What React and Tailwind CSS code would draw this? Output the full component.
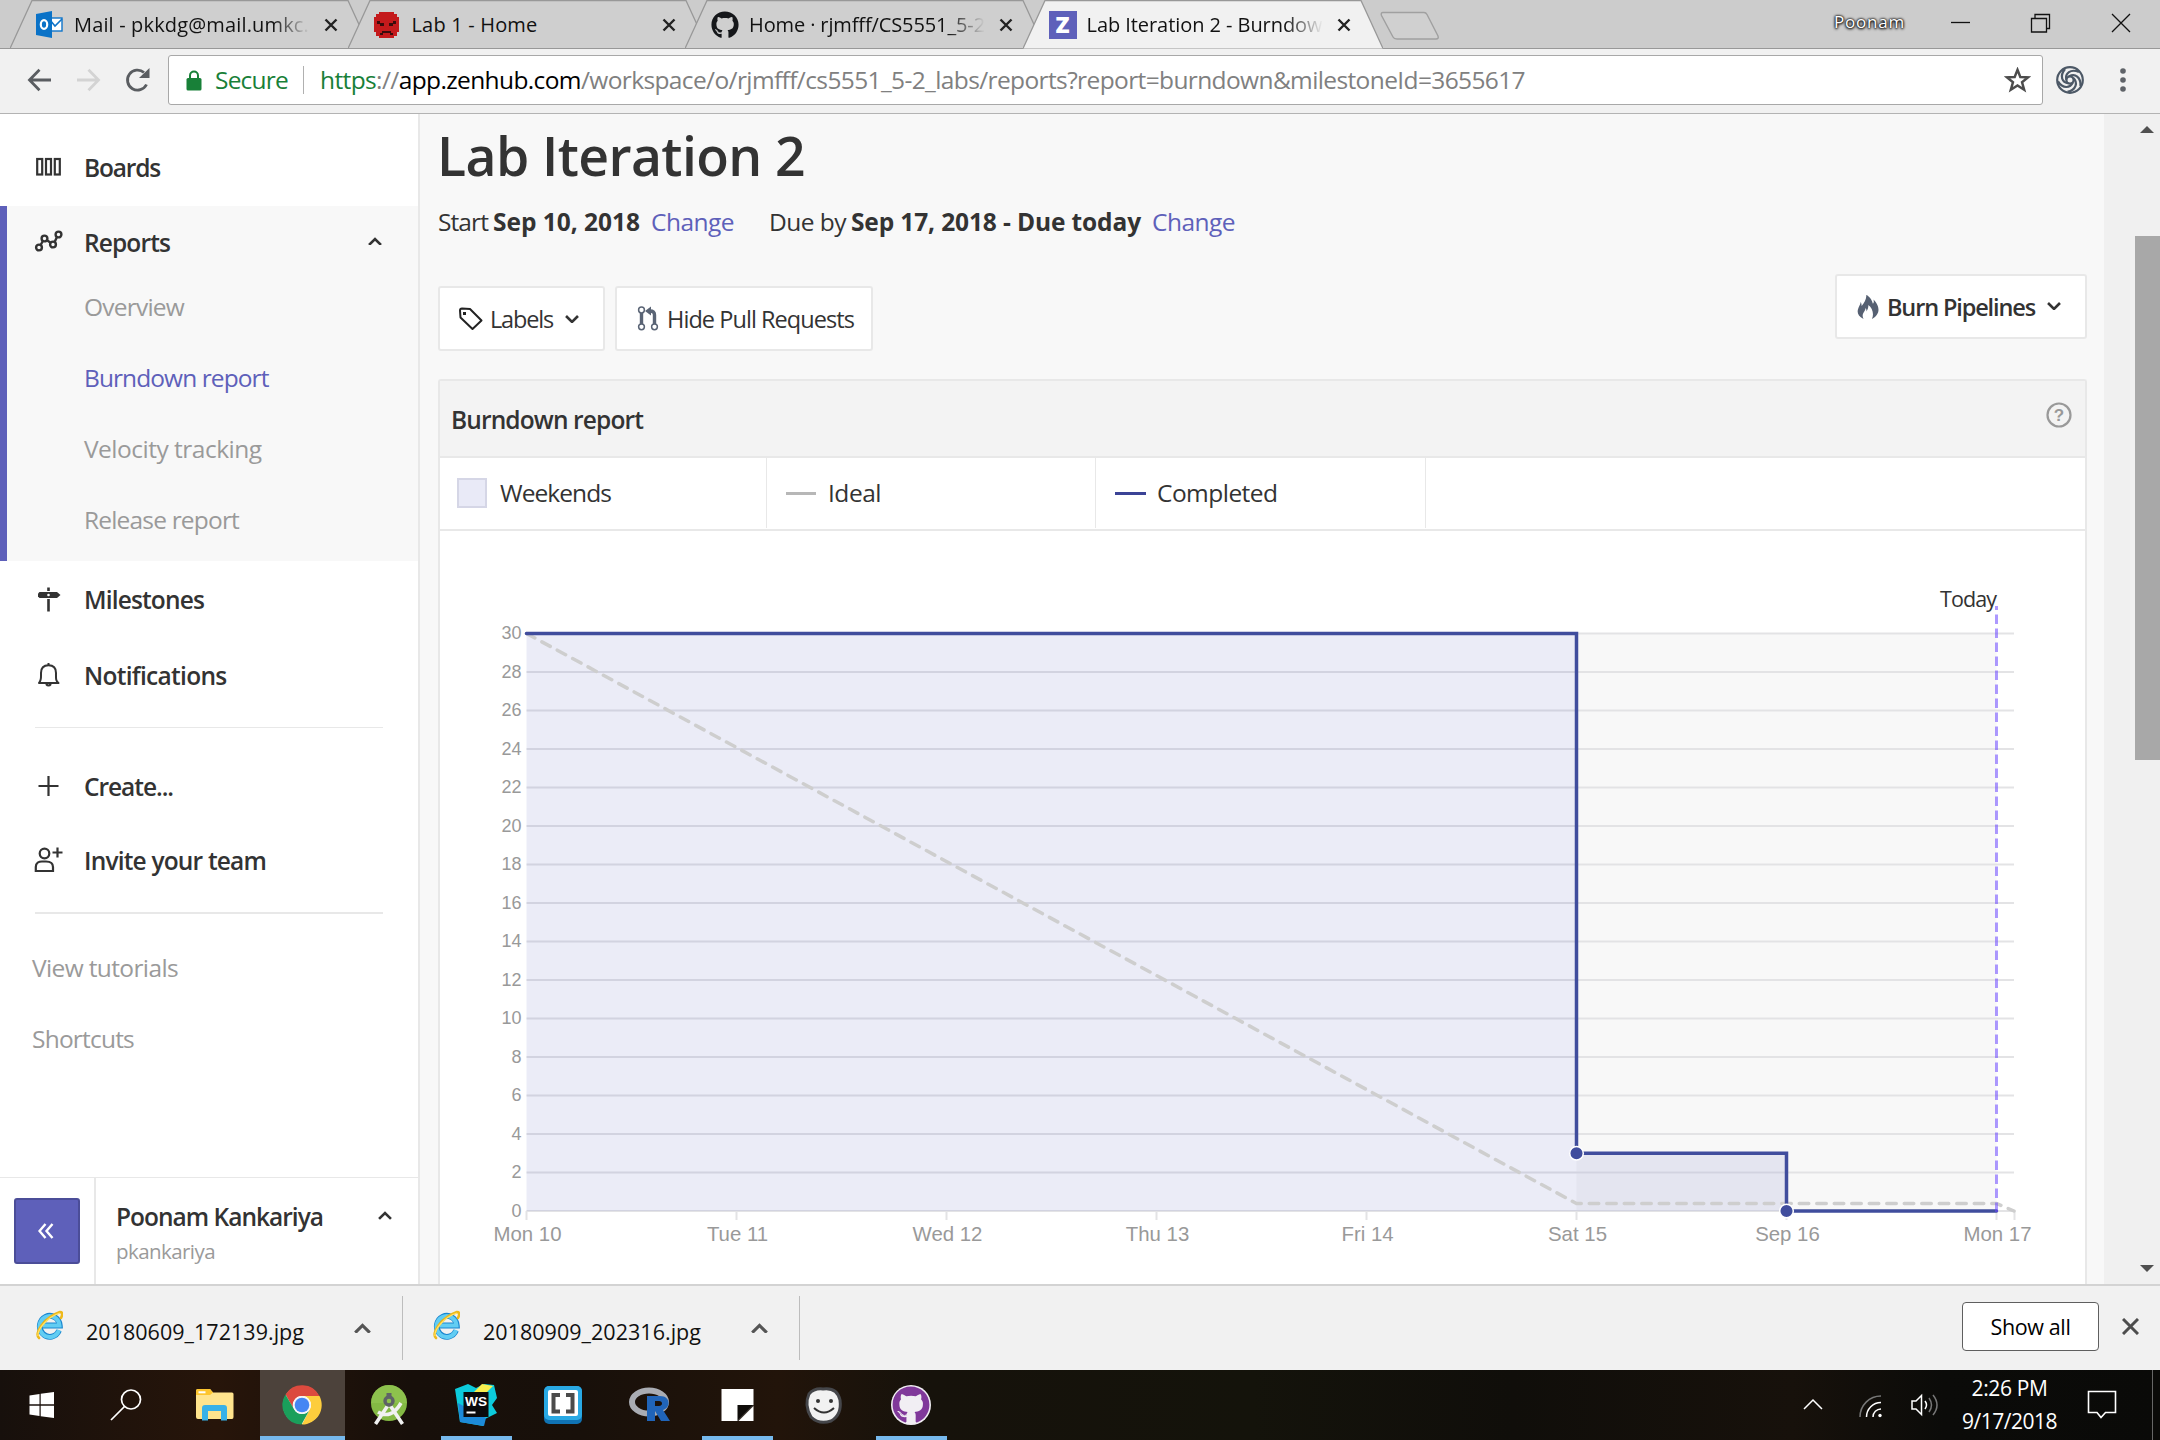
import { useLayoutEffect, useRef } from "react";
import { FaGithub } from "react-icons/fa";
import { ImFire } from "react-icons/im";

/* Single line of text whose tracking is adjusted so that it spans w pixels. */
function Fit({ w, className = "", children }) {
  const ref = useRef(null);
  useLayoutEffect(() => {
    const el = ref.current;
    el.style.letterSpacing = "0px";
    const natural = el.getBoundingClientRect().width;
    el.style.letterSpacing = `${(w - natural) / el.textContent.length}px`;
  }, [w, children]);
  return (
    <span ref={ref} className={`inline-block shrink-0 whitespace-pre ${className}`}>
      {children}
    </span>
  );
}

function Chevron({ up, className = "", size = 14, stroke = "#333", sw = 2.6 }) {
  return (
    <svg width={size} height={size * 0.64} viewBox="0 0 14 9" className={`shrink-0 ${className}`} fill="none" stroke={stroke} strokeWidth={sw}>
      <path d={up ? "M1 8 L7 2 L13 8" : "M1 1 L7 7 L13 1"} />
    </svg>
  );
}

/* ---------- Browser tabs ---------- */

function OutlookIcon() {
  return (
    <svg width="27" height="27" viewBox="0 0 27 27">
      <rect x="13" y="7" width="13" height="13" fill="#fff" stroke="#0f74c9" strokeWidth="1.4" />
      <path d="M14 9 L19 15 L26 8" fill="none" stroke="#0f74c9" strokeWidth="1.6" />
      <path d="M0 3 L16 0 V27 L0 24 Z" fill="#0a72c7" />
      <ellipse cx="8" cy="13.5" rx="3.2" ry="4.3" fill="none" stroke="#fff" strokeWidth="2.2" />
    </svg>
  );
}

function AngryIcon() {
  return (
    <svg width="25" height="26" viewBox="0 0 25 26">
      <path d="M5 0 H20 V2 H23 V5 H25 V20 H23 V24 H20 V26 H5 V24 H2 V20 H0 V5 H2 V2 H5 Z" fill="#c41a1c" />
      <path d="M3 9 H6 V11 H10 V14 H6 V12 H3 Z M22 9 H19 V11 H15 V14 H19 V12 H22 Z M8 19 H17 V21 H19 V23 H16 V21 H9 V23 H6 V21 H8 Z" fill="#3a0c0c" />
    </svg>
  );
}

function ZenIcon() {
  return (
    <span className="flex h-7 w-7 items-center justify-center bg-[#5e60ba] font-['Open_Sans',sans-serif] text-[23px] leading-none font-extrabold text-white">Z</span>
  );
}

function Tab({ icon, label, w, active, fade }) {
  return (
    <div className={`relative -mr-[22.5px] h-[49px] w-[360px] shrink-0 ${active ? "z-10" : ""}`}>
      <svg className="absolute inset-0" width="360" height="49" viewBox="0 0 360 49">
        <path d="M0 48.5 L22 0.5 H338 L360 48.5" fill={active ? "#f1f1f1" : "#cfcfcf"} stroke="#989898" strokeWidth="1.3" />
        {!active && <path d="M0 48.5 H360" stroke="#989898" />}
      </svg>
      <div className="relative flex h-[49px] items-center pl-[26px]">
        <span className="flex w-7 shrink-0 items-center">{icon}</span>
        <span className={`ml-[10px] w-[236px] overflow-hidden text-[20px] leading-[30px] text-[#111] ${fade ? "[mask-image:linear-gradient(to_right,black_84%,transparent_100%)]" : ""}`}>
          <Fit w={w}>{label}</Fit>
        </span>
        <svg width="14" height="14" viewBox="0 0 14 14" className="ml-[14px]" stroke="#222" strokeWidth="2.4">
          <path d="M1.5 1.5 L12.5 12.5 M12.5 1.5 L1.5 12.5" />
        </svg>
      </div>
    </div>
  );
}

function TabStrip() {
  return (
    <div className="flex h-[49px] shrink-0 border-b border-[#989898] bg-[#cccccc] pl-[10px]">
      <Tab icon={<OutlookIcon />} label="Mail - pkkdg@mail.umkc." w={235} fade />
      <Tab icon={<AngryIcon />} label="Lab 1 - Home" w={126} />
      <Tab icon={<FaGithub size={28} color="#15171a" />} label="Home · rjmfff/CS5551_5-2" w={236} fade />
      <Tab icon={<ZenIcon />} label="Lab Iteration 2 - Burndow" w={236} active fade />
      <svg width="62" height="30" viewBox="0 0 62 30" className="mt-[11px] ml-[19px]">
        <path d="M4 1.5 H45 Q47 1.5 48 3.5 L59 25 Q60 28 57 28 H18 Q15 28 14 26 L2.5 4.5 Q1.5 1.5 4 1.5 Z" fill="#d0d0d0" stroke="#a0a0a0" strokeWidth="1.4" />
      </svg>
      <div className="ml-auto flex h-[46px] items-center">
        <Fit w={71} className="mb-[2px] text-[17px] text-white [text-shadow:0_0_2px_#000,0_0_3px_#000,0_1px_3px_#000]">Poonam</Fit>
        <svg width="180" height="20" viewBox="0 0 180 20" className="mr-[29px] ml-[46px]" fill="none" stroke="#111" strokeWidth="1.3">
          <path d="M0 9.5 H19" />
          <path d="M80.5 5.5 H95.5 V19 H80.5 Z M84 5.5 V1.5 H98.5 V15.5 H95.5" />
          <path d="M161 1 L179 19 M179 1 L161 19" />
        </svg>
      </div>
    </div>
  );
}

/* ---------- Address bar ---------- */

function Toolbar() {
  return (
    <div className="flex h-[65px] shrink-0 items-center border-b border-[#b3b3b3] bg-[#f1f1f1] pb-[2px]">
      <svg width="124" height="26" viewBox="0 0 124 26" className="ml-[27px]" fill="none" strokeWidth="2.8">
        <path d="M24 13 H3 M12.5 2.8 L2.5 13 L12.5 23.2" stroke="#5a5d61" />
        <path d="M50 13 H71 M61.5 2.8 L71.5 13 L61.5 23.2" stroke="#d3d3d3" />
        <path d="M119.5 17.5 A10 10 0 1 1 117 5.5" stroke="#5a5d61" />
        <path d="M122.500 1 V11 H112 Z" fill="#5a5d61" />
      </svg>
      <div className="ml-[17px] flex h-[50px] w-[1875px] items-center rounded-[3px] border border-[#a8a8a8] bg-white">
        <svg width="16" height="21" viewBox="0 0 16 21" className="ml-[17px]">
          <rect x="0.5" y="8" width="15" height="12.5" rx="1.5" fill="#188038" />
          <path d="M4 9 V5.5 A4 4 0 0 1 12 5.5 V9" fill="none" stroke="#188038" strokeWidth="2" />
        </svg>
        <Fit w={73} className="ml-[13px] text-[24.5px] text-[#188038]">Secure</Fit>
        <span className="ml-[15px] h-[28px] w-px bg-[#b0b0b0]" />
        <Fit w={1205} className="ml-[16px] text-[24.5px] text-[#808080]">
          <span className="text-[#188038]">https</span>://<span className="text-black">app.zenhub.com</span>/workspace/o/rjmfff/cs5551_5-2_labs/reports?report=burndown&amp;milestoneId=3655617
        </Fit>
        <svg width="27" height="26" viewBox="0 0 27 26" className="mr-[11px] ml-auto" fill="none" stroke="#4c4c4c" strokeWidth="2.4">
          <path d="M13.5 2.8 L16.3 10 L24.2 10.3 L18 15.2 L20.2 22.8 L13.5 18.4 L6.8 22.8 L9 15.2 L2.8 10.3 L10.7 10 Z" />
        </svg>
      </div>
      <svg width="30" height="30" viewBox="-15 -15 30 30" className="ml-[12px]" fill="none" stroke="#4c5866" strokeWidth="2.2">
        <circle r="12.8" />
        <circle r="3.6" />
        {[0, 72, 144, 216, 288].map((a) => (
          <path key={a} transform={`rotate(${a})`} d="M-1 -3.6 C5 -7 11 -3 10.5 6" />
        ))}
      </svg>
      <svg width="8" height="26" viewBox="0 0 8 26" className="ml-[34px]" fill="#5f6368">
        <circle cx="4" cy="4" r="2.8" />
        <circle cx="4" cy="13" r="2.8" />
        <circle cx="4" cy="22" r="2.8" />
      </svg>
    </div>
  );
}

/* ---------- Sidebar ---------- */

const icons = {
  boards: (
    <g strokeWidth="2.2">
      <rect x="3.2" y="6" width="5" height="15.5" />
      <rect x="12" y="6" width="5" height="15.5" />
      <rect x="20.8" y="6" width="5" height="15.5" />
    </g>
  ),
  reports: (
    <g strokeWidth="2.4">
      <circle cx="5" cy="19.5" r="2.9" />
      <circle cx="10.5" cy="10.5" r="2.9" />
      <circle cx="19" cy="16.5" r="2.9" />
      <circle cx="24.5" cy="6.5" r="2.9" />
      <path d="M6.6 17 L8.9 13 M13 12.2 L16.6 14.8 M20.6 14 L23 9" />
    </g>
  ),
  milestones: (
    <g>
      <path d="M14.5 2.5 V6 M14.5 14 V26.5" strokeWidth="2.6" />
      <path d="M5.5 7 H23 L26.5 10 L23 13 H5.5 L4 11.5 V8.5 Z" fill="#333" stroke="none" />
      <circle cx="14.5" cy="10" r="1.3" fill="#fff" stroke="none" />
    </g>
  ),
  bell: (
    <g strokeWidth="2">
      <path d="M5 22 C7.5 19.5 7 17.5 7 12 C7 7 10 4.300 14.500 4.300 C19 4.300 22 7 22 12 C22 17.500 21.500 19.500 24.500 22 Z" strokeLinejoin="round" />
      <path d="M12 23 Q14.500 26 17 23 M14.500 2 V4.500" />
    </g>
  ),
  plus: <path d="M14.5 4 V24 M4.5 14 H24.5" strokeWidth="2.2" />,
  invite: (
    <g strokeWidth="2.2">
      <circle cx="10.5" cy="7.5" r="4.8" />
      <path d="M1.8 25 V21 C1.8 17 5 15.5 8 15.5 H12 C16 15.5 19 17 19 21 V25 Z" />
      <path d="M23.5 1.5 V11.5 M18.5 6.5 H28.5" />
    </g>
  ),
};

function NavIcon({ name }) {
  return (
    <svg width="30" height="30" viewBox="0 0 30 30" fill="none" stroke="#333" className="mr-[20px] shrink-0">
      {icons[name]}
    </svg>
  );
}

function NavRow({ icon, label, w, className, children }) {
  return (
    <div className={`flex shrink-0 items-center pl-[34px] ${className}`}>
      <NavIcon name={icon} />
      <Fit w={w} className="text-[24.5px] leading-[36px] font-semibold text-[#333]">{label}</Fit>
      {children}
    </div>
  );
}

function SubRow({ label, w, className = "pl-[84px] text-[#9a9a9a]" }) {
  return (
    <div className={`flex h-[71px] shrink-0 items-center text-[24.5px] leading-[36px] ${className}`}>
      <Fit w={w}>{label}</Fit>
    </div>
  );
}

function Sidebar() {
  return (
    <aside className="flex w-[420px] shrink-0 flex-col border-r-2 border-[#e8e8e8] bg-white">
      <NavRow icon="boards" label="Boards" w={76} className="mt-[15px] h-[77px]" />
      <div className="relative h-[355px] shrink-0 bg-[#f8f8f8] pt-[9px]">
        <span className="absolute inset-y-0 left-0 w-[7px] bg-[#5e60ba]" />
        <NavRow icon="reports" label="Reports" w={86} className="h-[56px]">
          <Chevron up className="mr-[36px] mb-[4px] ml-auto" />
        </NavRow>
        <SubRow label="Overview" w={100} />
        <SubRow label="Burndown report" w={184.5} className="pl-[84px] text-[#5e60ba]" />
        <SubRow label="Velocity tracking" w={177.5} />
        <SubRow label="Release report" w={155} />
      </div>
      <NavRow icon="milestones" label="Milestones" w={120} className="mt-px h-[76px]" />
      <NavRow icon="bell" label="Notifications" w={142.5} className="h-[75px]" />
      <hr className="mx-[35px] mt-[14px] border-t-[1.5px] border-[#e8e8e8]" />
      <NavRow icon="plus" label="Create..." w={89} className="mt-[21px] h-[75px]" />
      <NavRow icon="invite" label="Invite your team" w={182} className="h-[74px]" />
      <hr className="mx-[35px] mt-[14px] border-t-2 border-[#e8e8e8]" />
      <div className="mt-[18px]">
        <SubRow label="View tutorials" w={146} className="pl-[32px] text-[#9a9a9a]" />
        <SubRow label="Shortcuts" w={102} className="pl-[32px] text-[#9a9a9a]" />
      </div>
      <div className="mt-auto flex h-[107px] shrink-0 border-t border-[#e8e8e8]">
        <div className="flex w-[96px] justify-start border-r-2 border-[#e8e8e8] pt-[20px] pl-[14px]">
          <button className="flex h-[66px] w-[66px] items-center justify-center rounded-[3px] border-2 border-[#4b4d98] bg-[#5e60ba]">
            <svg width="16" height="16" viewBox="0 0 16 16" fill="none" stroke="#fff" strokeWidth="2.4" className="mr-[2px]">
              <path d="M7.5 1 L1.5 8 L7.5 15 M14.5 1 L8.5 8 L14.5 15" />
            </svg>
          </button>
        </div>
        <div className="flex flex-col items-start pt-[21px] pl-[20px]">
          <Fit w={207} className="text-[24.5px] leading-[36px] font-semibold text-[#333]">Poonam Kankariya</Fit>
          <Fit w={99} className="text-[20.5px] leading-[32px] text-[#9a9a9a]">pkankariya</Fit>
        </div>
        <Chevron up className="mt-[33px] mr-[26px] ml-auto" />
      </div>
    </aside>
  );
}

/* ---------- Burndown chart ---------- */

const X0 = 526.5;
const DAY = 210;
const Y0 = 1211;
const UNIT = 19.25;
const yAt = (v) => Y0 - v * UNIT;
const days = ["Mon 10", "Tue 11", "Wed 12", "Thu 13", "Fri 14", "Sat 15", "Sep 16", "Mon 17"];
const values = Array.from({ length: 16 }, (_, i) => i * 2);

function BurndownChart() {
  const sat = X0 + DAY * 5;
  const sun = X0 + DAY * 6;
  const today = X0 + DAY * 7;
  return (
    <svg width="1645" height="753" viewBox="440 531 1645 753" className="block">
      <rect x={sat} y={yAt(30)} width={DAY * 2} height={UNIT * 30} fill="#f8f8f8" />
      {values.map((v) => (
        <g key={v}>
          <path d={`M${X0} ${yAt(v)} H2014`} stroke="#e3e3e5" strokeWidth="2" />
          <text x="521.5" y={yAt(v) + 5.5} textAnchor="end" fontSize="18" fill="#999">{v}</text>
        </g>
      ))}
      <path d={`M${X0} ${yAt(30)} H${sat} V${Y0} H${X0} Z M${sat} ${yAt(3)} H${sun} V${Y0} H${sat} Z`} fill="#5e60ba" fillOpacity="0.12" />
      {days.map((d, i) => (
        <g key={d}>
          <path d={`M${X0 + DAY * i} ${Y0} v9`} stroke="#e3e3e5" strokeWidth="2" />
          <text x={X0 + DAY * i + 1} y="1240.5" textAnchor="middle" fontSize="20.4" fill="#999">{d}</text>
        </g>
      ))}
      <path d={`M2014.5 ${Y0} v9`} stroke="#e3e3e5" strokeWidth="2" />
      <path d={`M${X0} ${yAt(30)} L${sat} 1203.5 H${today} L2014 ${Y0}`} fill="none" stroke="#cecece" strokeWidth="3.5" strokeLinecap="round" strokeDasharray="9.5 8" />
      <path d={`M${X0} ${yAt(30)} H${sat} V${yAt(3)} H${sun} V${Y0} H${today}`} fill="none" stroke="#404d9d" strokeWidth="3.5" strokeLinecap="round" />
      <circle cx={sat} cy={yAt(3)} r="6.8" fill="#404d9d" stroke="#fff" strokeWidth="1.5" />
      <circle cx={sun} cy={Y0} r="6.8" fill="#404d9d" stroke="#fff" strokeWidth="1.5" />
      <path d={`M${today} 1212 V606`} stroke="#6a45ff" strokeOpacity="0.55" strokeWidth="3" strokeDasharray="9.5 4.5" />
      <text x="1997" y="606.5" textAnchor="end" fontSize="21.5" textLength="57" fill="#333" className="font-['Open_Sans',sans-serif]!">Today</text>
    </svg>
  );
}

/* ---------- Main content ---------- */

function OutlineButton({ className, children }) {
  return (
    <button className={`flex h-[65px] items-center rounded-[3px] border-2 border-[#e8e8e8] bg-white text-[23.5px] leading-[34px] text-[#333] ${className}`}>
      {children}
    </button>
  );
}

function LegendCell({ className, swatch, label, w }) {
  return (
    <div className={`flex items-center border-r-[1.5px] border-[#e8e8e8] ${className}`}>
      {swatch}
      <Fit w={w}>{label}</Fit>
    </div>
  );
}

function Main() {
  return (
    <main className="flex w-[1684px] shrink-0 flex-col overflow-hidden bg-[#f8f8f8] pl-[18px] text-[#333]">
      <h1 className="mt-[4px] flex h-[76px] items-center">
        <Fit w={368} className="-ml-[1px] text-[53.5px] leading-[76px] font-semibold">Lab Iteration 2</Fit>
      </h1>
      <div className="mt-[10px] flex h-[36px] items-center text-[24.5px] leading-[36px]">
        <Fit w={50}>Start</Fit>
        <Fit w={147} className="ml-[5px] font-bold">Sep 10, 2018</Fit>
        <Fit w={83} className="ml-[11px] text-[#5e60ba]">Change</Fit>
        <Fit w={77} className="ml-[35px]">Due by</Fit>
        <Fit w={290} className="ml-[5px] font-bold">Sep 17, 2018 - Due today</Fit>
        <Fit w={83} className="ml-[11px] text-[#5e60ba]">Change</Fit>
      </div>
      <div className="mt-[34px] mr-[17px] flex">
        <OutlineButton className="mt-[12px] w-[167px] pl-[18px]">
          <svg width="25" height="24" viewBox="0 0 25 24" fill="none" stroke="#222" strokeWidth="2" strokeLinejoin="round">
            <path d="M2 3.5 Q2 1.5 4 1.5 L12 2 L23.5 13.5 L14.5 22 L2.5 10.5 Z" />
            <rect x="5" y="5" width="3" height="3" fill="#222" stroke="none" />
          </svg>
          <Fit w={63} className="ml-[7px]">Labels</Fit>
          <Chevron className="mt-[1px] ml-[12px]" />
        </OutlineButton>
        <OutlineButton className="mt-[12px] ml-[10px] w-[258px] pl-[20px]">
          <svg width="22" height="25" viewBox="0 0 22 25" fill="none" stroke="#5a6475">
            <path d="M4.5 7 V18 M17.5 18 V9 Q17.5 5 13 5 H11" strokeWidth="3.4" />
            <path d="M14 0.5 V9.5 L8 5 Z" fill="#5a6475" stroke="none" />
            <g strokeWidth="1.5" fill="#fff">
              <circle cx="4.5" cy="4" r="2.9" />
              <circle cx="4.5" cy="20.8" r="2.9" />
              <circle cx="17.5" cy="20.8" r="2.9" />
            </g>
          </svg>
          <Fit w={187} className="ml-[8px]">Hide Pull Requests</Fit>
        </OutlineButton>
        <OutlineButton className="ml-auto w-[252px] pl-[19px] font-semibold">
          <ImFire size={24} color="#566072" />
          <Fit w={148} className="ml-[7px]">Burn Pipelines</Fit>
          <Chevron className="mb-[1px] ml-[12px]" />
        </OutlineButton>
      </div>

      <section className="mt-[28px] mr-[17px] flex h-[906px] flex-col rounded-t-[3px] border-2 border-b-0 border-[#e8e8e8] bg-white text-[24.5px] leading-[36px]">
        <header className="flex h-[77px] shrink-0 items-center border-b-2 border-[#e8e8e8] bg-[#f3f3f3] pl-[11px] font-semibold">
          <Fit w={192} className="mt-[2px]">Burndown report</Fit>
          <svg width="26" height="26" viewBox="0 0 26 26" className="mr-[13px] mb-[7px] ml-auto">
            <circle cx="13" cy="13" r="11.5" fill="none" stroke="#999" strokeWidth="2.2" />
            <text x="13" y="19" textAnchor="middle" fontSize="17" fontWeight="700" fill="#999">?</text>
          </svg>
        </header>
        <div className="flex h-[73px] shrink-0 border-b-2 border-[#e8e8e8] pb-px">
          <LegendCell className="w-[327px] pl-[17px]" w={111} label="Weekends" swatch={<span className="mr-[13px] h-[30px] w-[30px] border-2 border-[#d5d6e6] bg-[#e9eaf7]" />} />
          <LegendCell className="w-[329px] pl-[19px]" w={53} label="Ideal" swatch={<span className="mr-[12px] h-[3px] w-[30px] bg-[#b7b7b7]" />} />
          <LegendCell className="w-[330px] pl-[19px]" w={120.5} label="Completed" swatch={<span className="mr-[11px] h-[3px] w-[31px] bg-[#3b4396]" />} />
        </div>
        <BurndownChart />
      </section>
    </main>
  );
}

function ScrollRail() {
  return (
    <div className="flex flex-1 flex-col items-end bg-[#f0f0f0]">
      <svg width="26" height="26" viewBox="0 0 26 26"><path d="M6 19 H20 L13 12 Z" fill="#505050" /></svg>
      <div className="mt-[96px] h-[524px] w-[25px] bg-[#a8a8a8]" />
      <svg width="26" height="26" viewBox="0 0 26 26" className="mt-auto mb-[3px]"><path d="M6 10 H20 L13 17 Z" fill="#505050" /></svg>
    </div>
  );
}

/* ---------- Downloads shelf ---------- */

function ExplorerE() {
  return (
    <svg width="28" height="30" viewBox="0 0 28 30" fill="none" className="shrink-0">
      <path d="M24 20.5 A10 10.5 0 1 1 24.8 15.5 H8" stroke="#1b87cf" strokeWidth="5.8" />
      <path d="M24 20 A10 10.5 0 1 1 24.5 15.5 H8" stroke="#62cdf3" strokeWidth="4" />
      <path d="M4 28 C-1 24 8 8 25 2 C28 2 27.5 5 26 8" stroke="#eeb91b" strokeWidth="2.6" strokeLinecap="round" />
      <path d="M3 26 C2 20 12 7 25 3" stroke="#ffe36b" strokeWidth="1.2" />
    </svg>
  );
}

function Download({ name, className }) {
  return (
    <div className={`flex h-[64px] items-center border-r border-[#bdbdbd] ${className}`}>
      <div className="mb-[6px]"><ExplorerE /></div>
      <Fit w={218} className="mt-[7px] ml-[23px] text-[21.5px] leading-[30px] text-[#111]">{name}</Fit>
      <Chevron up size={17} sw={2.6} stroke="#555" className="ml-[50px]" />
    </div>
  );
}

function DownloadShelf() {
  return (
    <div className="flex h-[86px] shrink-0 items-center border-t-2 border-[#d3d3d3] bg-[#f1f1f1]">
      <Download name="20180609_172139.jpg" className="w-[403px] pl-[35px]" />
      <Download name="20180909_202316.jpg" className="w-[397px] pl-[29px]" />
      <button className="mb-[3px] ml-auto flex h-[49px] w-[137px] items-center justify-center rounded-[4px] border border-[#5f5f5f] bg-white text-[21.5px] leading-[30px] font-medium text-black">
        <Fit w={80}>Show all</Fit>
      </button>
      <svg width="17" height="17" viewBox="0 0 17 17" className="mr-[21px] mb-[3px] ml-[23px]" stroke="#4d4d4d" strokeWidth="3">
        <path d="M1 1 L16 16 M16 1 L1 16" />
      </svg>
    </div>
  );
}

/* ---------- Taskbar ---------- */

const apps = [
  {
    w: 84,
    art: (
      <path fill="#fff" d="M-12.5 -9.5 L-2.5 -11 V-0.7 H-12.5 Z M-1.3 -11.2 L12 -13 V-0.7 H-1.3 Z M-12.5 0.7 H-2.5 V11 L-12.5 9.5 Z M-1.3 0.7 H12 V13 L-1.3 11.2 Z" />
    ),
  },
  {
    w: 84,
    art: (
      <g fill="none" stroke="#fff" strokeWidth="1.7">
        <circle cx="5" cy="-5.5" r="9.5" />
        <path d="M-1.5 1.5 L-15 15" />
      </g>
    ),
  },
  {
    w: 92,
    art: (
      <g transform="translate(1 0)">
        <path d="M-19 -14 Q-19 -16 -17 -16 H-5 L-2 -12.5 H17 Q18.5 -12.5 18.5 -11 V12 Q18.5 14 17 14 H-17 Q-19 14 -19 12 Z" fill="#ffe48d" />
        <path d="M-19 -14 Q-19 -16 -17 -16 H-5 L-2 -12.5 L-5 -10 H-19 Z" fill="#fdc52f" />
        <rect x="-16.5" y="-13.7" width="7" height="2" fill="#fff" />
        <path d="M-13 15.5 V3 Q-13 0 -10 0 H9 Q12 0 12 3 V15.5 H6 V6 H-7 V15.5 Z" fill="#38b1e8" />
      </g>
    ),
  },
  {
    w: 85,
    active: true,
    art: (
      <g transform="translate(-1 0)">
        <circle r="19" fill="#fff" />
        <path d="M0 -9 H17.5 A19.5 19.5 0 0 0 -16.5 -10.5 L-8 4.5 A9 9 0 0 1 0 -9 Z" fill="#dc4a3e" />
        <path d="M7.8 4.5 A9 9 0 0 0 0 -9 H17.5 A19.5 19.5 0 0 1 0 19.5 Z" fill="#fdcd3d" />
        <path d="M-7.8 4.5 A9 9 0 0 0 7.8 4.5 L-0.5 19.5 A19.5 19.5 0 0 1 -16.5 -10.5 Z" fill="#1a9f5b" />
        <circle r="9" fill="#f4f4f4" />
        <circle r="7.3" fill="#4586f3" />
      </g>
    ),
  },
  {
    w: 87,
    art: (
      <g>
        <circle cy="-2" r="18" fill="#84b944" />
        <path d="M-18 -2 A18 18 0 0 1 18 -2 Z" fill="#93c653" fillOpacity="0.6" />
        <path d="M-1.5 1 L-13.5 19 M1.5 1 L13.5 19 M-11 7 Q2 15 12 -2" stroke="#f1f1f1" strokeWidth="3.6" fill="none" />
        <circle cy="-4" r="4" fill="none" stroke="#5e6266" strokeWidth="3.4" />
        <rect x="-2.5" y="-12" width="5" height="5" fill="#5e6266" />
      </g>
    ),
  },
  {
    w: 89,
    open: true,
    art: (
      <g transform="translate(-1 0)">
        <path d="M-21 -16 L-8 -21 L0 -17 L8 -21 L18 -20 L21 -7 L16 0 L21 8 L9 14 L7 21 L-16 17 Z" fill="#0ccbdc" />
        <path d="M-18 -2 L-16 17 L8 21 L10 13 Z" fill="#1d8ad8" />
        <path d="M-2 -13 L6 -21 L17 -19 L9 -11 Z" fill="#f7ef4e" />
        <rect x="-12.5" y="-13" width="25" height="25" fill="#0b0b0b" />
        <text x="-11" y="1" fontSize="13.5" fontWeight="700" textLength="22" lengthAdjust="spacingAndGlyphs" fill="#fff">WS</text>
        <rect x="-9.5" y="6.5" width="9" height="2" fill="#fff" />
      </g>
    ),
  },
  {
    w: 85,
    art: (
      <g transform="translate(-1 0)">
        <rect x="-19" y="-19" width="38" height="38" rx="5" fill="#1073b4" />
        <rect x="-19" y="-19" width="38" height="34" rx="5" fill="#29a9e4" />
        <rect x="-15" y="-15" width="30" height="26" rx="2" fill="#fff" />
        <path d="M-3 -10 H-9.5 V6.5 H-3 M3 -10 H9.5 V6.5 H3" fill="none" stroke="#4b4b4b" strokeWidth="4" />
      </g>
    ),
  },
  {
    w: 89,
    art: (
      <g>
        <ellipse cx="-2" cy="-3" rx="17" ry="11.5" fill="none" stroke="#a9acb3" strokeWidth="6" />
        <path fillRule="evenodd" d="M-4 -9 H9 C20 -9 20 3 12 5 L19 16 H10 L4 6 V16 H-4 Z M4 -4 V1 H8 C12 1 12 -4 8 -4 Z" fill="#2064b8" />
      </g>
    ),
  },
  {
    w: 85,
    open: true,
    art: (
      <g transform="translate(-0.5 0)">
        <path d="M-16 -16 H16 V0 L0 16 H-16 Z" fill="#fff" />
        <path d="M0 0 H16 L0 16 Z" fill="#0f0c09" />
        <path d="M16 1 V16 H1 Z" fill="#fff" />
      </g>
    ),
  },
  {
    w: 87,
    art: (
      <g>
        <path d="M-15 -11 Q-10 -17 -1 -16 Q13 -18 16 -5 Q18 10 7 16 Q-5 20 -13 12 Q-20 0 -15 -11 Z" fill="#f2f2f2" stroke="#45464a" strokeWidth="3" />
        <circle cx="-6" cy="-4" r="2" fill="#333" />
        <circle cx="7" cy="-4" r="2" fill="#333" />
        <path d="M-10 3 Q0 12 10 3" fill="none" stroke="#333" strokeWidth="2" />
      </g>
    ),
  },
  {
    w: 88,
    open: true,
    art: (
      <g>
        <circle r="20" fill="#f1eef3" />
        <FaGithub x="-19" y="-19" size={38} color="#80389a" />
      </g>
    ),
  },
];

function Taskbar() {
  return (
    <div className="flex h-[70px] shrink-0 bg-[linear-gradient(to_right,#17100c_0%,#27150a_10%,#170f0a_19%,#18100a_27%,#22140a_36%,#16120b_43%,#14130b_58%,#100e0a_70%,#17110b_83%,#0b0b09_90%,#0a0a08_100%)]">
      {apps.map((a, i) => (
        <div key={i} className={`relative flex h-[70px] shrink-0 items-center justify-center ${a.active ? "bg-[#4c423b]" : ""}`} style={{ width: a.w }}>
          <svg width="50" height="50" viewBox="-25 -25 50 50" className="mb-px">{a.art}</svg>
          {a.open && <span className="absolute bottom-0 h-1 w-[71px] bg-[#76b9ed]" />}
          {a.active && <span className="absolute inset-x-0 bottom-0 h-1 bg-[#76b9ed]" />}
        </div>
      ))}
      <div className="ml-auto flex items-center text-white">
        <svg width="136" height="26" viewBox="0 0 136 26" fill="none" stroke="#fff" strokeWidth="1.5">
          <path d="M1 17 L10 8 L19 17" />
          <g>
            <path d="M57 25 A21 21 0 0 1 78 4" stroke="#777" />
            <path d="M63.5 25 A14.5 14.5 0 0 1 78 10.5 M70 25 A8 8 0 0 1 78 17" />
            <circle cx="77" cy="23.5" r="1.7" fill="#fff" stroke="none" />
          </g>
          <path d="M109 9 H113 L118.5 3.5 V22.5 L113 17 H109 Z" />
          <path d="M122 9 Q125 13 122 17" />
          <path d="M126 6 Q131 13 126 20 M130 3 Q138 13 130 23" stroke="#777" />
        </svg>
        <div className="ml-[22px] flex w-[98px] flex-col items-center text-[21px] leading-[33px]">
          <Fit w={76}>2:26 PM</Fit>
          <Fit w={95}>9/17/2018</Fit>
        </div>
        <svg width="30" height="30" viewBox="0 0 30 30" className="mr-[35px] mb-px ml-[28px]" fill="none" stroke="#fff" strokeWidth="1.6">
          <path d="M1.5 1.5 H28.5 V22.5 H18.5 L14 27.5 L10 22.5 H1.5 Z" />
        </svg>
        <span className="mr-[7px] h-[70px] w-[1.5px] bg-[#666]" />
      </div>
    </div>
  );
}

export default function App() {
  return (
    <div className="flex h-[1440px] w-[2160px] flex-col overflow-hidden bg-white font-['Open_Sans',sans-serif] [&_svg_text]:font-['Liberation_Sans',Arial,sans-serif]">
      <TabStrip />
      <Toolbar />
      <div className="flex h-[1170px] shrink-0">
        <Sidebar />
        <Main />
        <ScrollRail />
      </div>
      <DownloadShelf />
      <Taskbar />
    </div>
  );
}
